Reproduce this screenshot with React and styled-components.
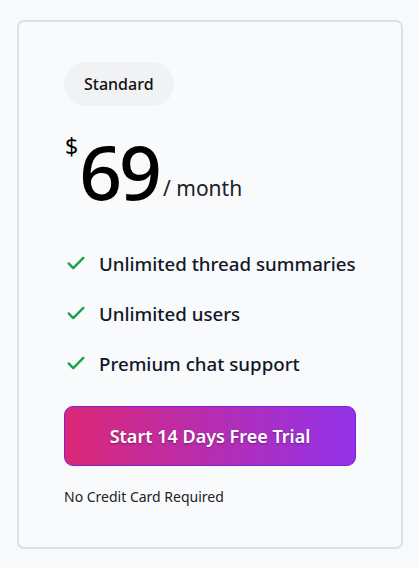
import React from "react"
import styled, { createGlobalStyle } from "styled-components"

const GlobalStyle = createGlobalStyle`
  html, body {
    margin: 0;
    padding: 0;
    background: #f8f9fb;
    font-family: "Noto Sans", "Open Sans", sans-serif;
  }
`

const features = [
  "Unlimited thread summaries",
  "Unlimited users",
  "Premium chat support",
]

const Check = () => (
  <svg width="22" height="22" viewBox="0 0 24 24" fill="none" stroke="#16a34a" strokeWidth="2.6" strokeLinecap="round" strokeLinejoin="round">
    <path d="M4 12.5l5 5L20 6.5" />
  </svg>
)

export default function App() {
  return (
    <>
      <GlobalStyle />
      <Page>
        <Card>
          <Badge>Standard</Badge>
          <Price>
            <Currency>$</Currency>
            <Amount>69</Amount>
            <Period>/ month</Period>
          </Price>
          <FeatureList>
            {features.map(f => (
              <Feature key={f}>
                <Check />
                <span>{f}</span>
              </Feature>
            ))}
          </FeatureList>
          <TrialButton>Start 14 Days Free Trial</TrialButton>
          <Note>No Credit Card Required</Note>
        </Card>
      </Page>
    </>
  )
}

const Page = styled.div`
  padding: 20px 15px 19px 17px;
`

const Card = styled.div`
  box-sizing: border-box;
  width: 386px;
  height: 529px;
  border: 2px solid #dfe0e3;
  border-radius: 7px;
  background: #f9fafc;
  padding: 40px 45px 0 45px;
  display: flex;
  flex-direction: column;
  align-items: flex-start;
`

const Badge = styled.div`
  height: 44px;
  padding: 0 20px;
  display: flex;
  align-items: center;
  border-radius: 22px;
  background: #f1f2f4;
  font-size: 16px;
  font-weight: 500;
  color: #111;
`

const Price = styled.div`
  display: flex;
  align-items: flex-end;
  margin-top: 25px;
  color: #000;
  height: 70px;
`

const Currency = styled.span`
  align-self: flex-start;
  font-size: 23px;
  line-height: 1;
  margin: 4px 1px 0 1px;
`

const Amount = styled.span`
  font-size: 75px;
  line-height: 60px;
  font-weight: 500;
  letter-spacing: -3px;
`

const Period = styled.span`
  font-size: 21px;
  line-height: 1;
  color: #222;
  margin-left: 4px;
  margin-bottom: 2px;
`

const FeatureList = styled.ul`
  list-style: none;
  margin: 49px 0 0 0;
  padding: 0;
  display: flex;
  flex-direction: column;
  gap: 24px;
`

const Feature = styled.li`
  display: flex;
  align-items: center;
  gap: 12px;
  font-size: 18.7px;
  font-weight: 500;
  color: #111827;
  height: 26px;
  padding-left: 1px;
`

const TrialButton = styled.button`
  margin-top: 30px;
  width: 292px;
  height: 60px;
  border-radius: 9px;
  border: 1px solid #7e22ce;
  background: linear-gradient(90deg, #dc2877 0%, #b62db0 50%, #9333ea 100%);
  color: #fff;
  font-family: "Noto Sans", "Open Sans", sans-serif;
  font-size: 18px;
  font-weight: 600;
  text-shadow: 0 1px 2px rgba(0, 0, 0, 0.35);
  cursor: pointer;
`

const Note = styled.div`
  margin-top: 21px;
  font-size: 14px;
  color: #222;
`
